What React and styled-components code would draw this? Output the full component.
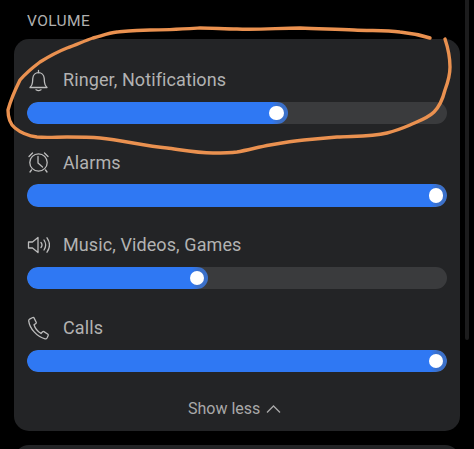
import React from 'react';
import styled, { createGlobalStyle } from 'styled-components';

const GlobalStyle = createGlobalStyle`
  html, body {
    margin: 0;
    height: 100%;
    background: #000;
    overflow: hidden;
  }
`;
const Page = styled.div`
  position: relative;
  width: 474px;
  height: 449px;
  overflow: hidden;
  background: #000;
  font-family: Roboto, "Noto Sans", sans-serif;
`;
const Heading = styled.div`
  height: 39px;
  padding: 12px 0 0 27px;
  box-sizing: border-box;
  color: #b0b0b0;
  font-size: 15.5px;
  line-height: 18px;
  letter-spacing: 0.4px;
`;
const Card = styled.section`
  width: 446px;
  height: 392px;
  margin-left: 14px;
  padding: 26.500px 13px 0;
  box-sizing: border-box;
  display: flex;
  flex-direction: column;
  background: #232426;
  border-radius: 15px;
`;
const Rows = styled.div`
  display: flex;
  flex-direction: column;
  gap: 24.2px;
`;
const Row = styled.div`
  display: flex;
  flex-direction: column;
  gap: 8px;
`;
const Label = styled.div`
  height: 28px;
  display: flex;
  align-items: center;
  gap: 13px;
  color: #b2b2b2;
  font-size: 18px;
  letter-spacing: 0.1px;
`;
const IconBox = styled.svg`
  width: 23px;
  height: 24px;
  flex: none;
  fill: none;
  stroke: #bcbcbc;
  stroke-width: 1.3;
  stroke-linecap: round;
  stroke-linejoin: round;
`;
const Track = styled.div`
  height: 22.5px;
  background: #3a3b3d;
  border-radius: 11.25px;
  overflow: hidden;
`;
const Fill = styled.div`
  width: ${(p) => p.$value}%;
  height: 100%;
  padding-right: 4px;
  box-sizing: border-box;
  display: flex;
  align-items: center;
  justify-content: flex-end;
  background: linear-gradient(to right, #2f78f3 calc(100% - 16px), #3b70c9 calc(100% - 10px));
  border-radius: 11.25px;
`;
const Thumb = styled.span`
  width: 14.5px;
  height: 14.5px;
  background: #fff;
  border-radius: 50%;
`;
const Footer = styled.button`
  align-self: flex-start;
  margin: 27px 0 0 161px;
  padding: 0;
  display: flex;
  align-items: center;
  gap: 6px;
  border: 0;
  background: none;
  color: #a9a9a9;
  font: inherit;
  font-size: 16px;
  line-height: 20px;
`;
const Chevron = styled.svg`
  width: 15px;
  height: 10px;
  fill: none;
  stroke: #a9a9a9;
  stroke-width: 1.3;
`;
const NextCard = styled.div`
  height: 20px;
  margin: 14px 14px 0;
  background: #232426;
  border-radius: 15px 15px 0 0;
`;
const Scrollbar = styled.div`
  position: absolute;
  top: 0;
  left: 465px;
  width: 4px;
  height: 340px;
  background: #1c1c1d;
  border-radius: 0 0 2px 2px;
`;
const Annotation = styled.svg`
  position: absolute;
  top: 0;
  left: 0;
  width: 474px;
  height: 449px;
  fill: none;
  stroke: #ea9150;
  stroke-width: 3.4;
  stroke-linecap: round;
  stroke-linejoin: round;
  pointer-events: none;
`;

const BellIcon = () => (
  <IconBox viewBox="0 0 23 24">
    <path d="M3 19.500h17c-1.700-1.600-2.400-3-2.500-5.200l-.3-4c-.3-3.200-2.700-5.600-5.700-5.600S6.100 7 5.800 10.300l-.3 4C5.400 16.500 4.700 17.900 3 19.500z" />
    <path d="M11.500 2.500v2.200M9 21.800c1.300.8 3.700.8 5 0" />
  </IconBox>
);
const AlarmIcon = () => (
  <IconBox viewBox="0 0 23 24">
    <circle cx="11.500" cy="12.500" r="8.700" />
    <path d="M11 6.500v6.500l4.500 4M2 6.500 5.500 3M21 6.500 17.500 3M4.500 20 3 22M18.500 20l1.500 2" />
  </IconBox>
);
const SpeakerIcon = () => (
  <IconBox viewBox="0 0 23 24">
    <path d="M1.500 9v6h4l5.500 4.500v-15L5.500 9z" />
    <path d="M14 9.500c1.200 1.500 1.200 3.500 0 5M17 7c2 3 2 7 0 10M20 4.800c3 4.300 3 10 0 14.400" />
  </IconBox>
);
const PhoneIcon = () => (
  <IconBox viewBox="0 0 23 24">
    <path d="M3 2.800 5.800 1.500c.5-.2 1 0 1.200.4l2.200 4.300c.2.400.1.900-.3 1.200L7 8.800c1 3.300 3.700 6.700 7 8.700l1.600-1.700c.4-.4.900-.4 1.300-.2l4 2.600c.4.300.5.800.3 1.200L20 22c-.4.700-1.100 1-1.900.8C9.800 20.800 2.700 12.500 1.700 4.800 1.600 3.900 2.200 3.200 3 2.800z" />
  </IconBox>
);

const channels = [
  { name: 'Ringer, Notifications', value: 62.1, icon: <BellIcon /> },
  { name: 'Alarms', value: 100, icon: <AlarmIcon /> },
  { name: 'Music, Videos, Games', value: 43.1, icon: <SpeakerIcon /> },
  { name: 'Calls', value: 100, icon: <PhoneIcon /> },
];

export default function App() {
  return (
    <Page>
      <GlobalStyle />
      <Heading>VOLUME</Heading>
      <Card>
        <Rows>
          {channels.map((c) => (
            <Row key={c.name}>
              <Label>
                {c.icon}
                {c.name}
              </Label>
              <Track>
                <Fill $value={c.value}>
                  <Thumb />
                </Fill>
              </Track>
            </Row>
          ))}
        </Rows>
        <Footer>
          Show less
          <Chevron viewBox="0 0 15 10">
            <path d="M1 8.500 7.500 2 14 8.500" />
          </Chevron>
        </Footer>
      </Card>
      <NextCard />
      <Scrollbar />
      <Annotation viewBox="0 0 474 449">
        <path d="M430 38C420 35 410 33 400 32C385 30 370 31 354 30C335 29 318 29 300 28C280 28 258 30 237 29C225 29 212 28 200 28C183 29 167 30 150 30C138 30 128 31 117 32C108 33 101 36 93 38C84 41 76 45 67 48C57 52 48 57 40 62C32 68 26 73 20 80C15 90 11 99 8 110C8 118 10 124 15 128C21 133 29 136 37 137C47 138 57 137 67 137C78 137 89 137 100 138C111 139 122 141 133 143C144 145 155 147 167 148C182 150 198 153 213 153C221 153 229 153 237 152C248 150 259 147 270 145C281 143 292 141 304 140C315 139 326 138 337 137C354 136 371 137 387 133C395 131 403 128 410 125C419 121 428 118 434 112C440 106 443 98 445 90C448 82 450 75 450 67C450 57 448 48 445 39" />
      </Annotation>
    </Page>
  );
}
